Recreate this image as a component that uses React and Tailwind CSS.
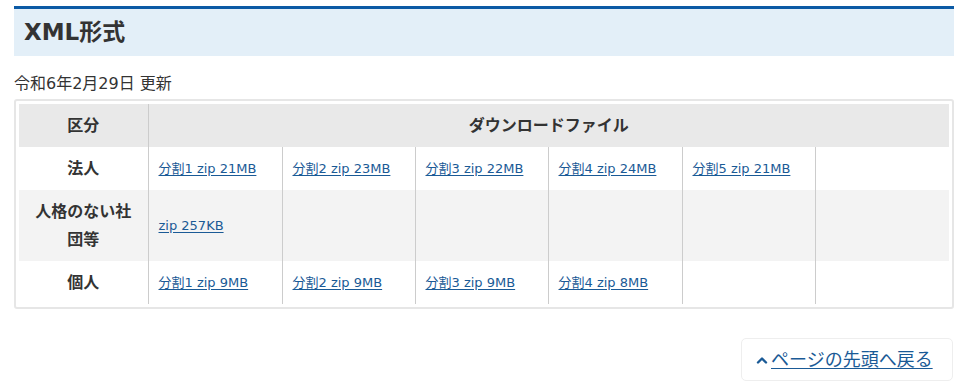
import React from 'react';

const FONT = { fontFamily: '"DejaVu Sans", "Noto Sans CJK JP", sans-serif' };

const rows = [
  { label: '法人', files: ['分割1 zip 21MB', '分割2 zip 23MB', '分割3 zip 22MB', '分割4 zip 24MB', '分割5 zip 21MB', ''], bg: 'bg-white', h: 'h-[43px]' },
  { label: '人格のない社団等', files: ['zip 257KB', '', '', '', '', ''], bg: 'bg-[#f3f3f3]', h: 'h-[71px]' },
  { label: '個人', files: ['分割1 zip 9MB', '分割2 zip 9MB', '分割3 zip 9MB', '分割4 zip 8MB', '', ''], bg: 'bg-white', h: 'h-[43px]' },
];

const ChevronUp = () => (
  <svg width="12" height="12" viewBox="0 0 12 12" className="text-[#1a5a96]">
    <path d="M2 8.5 L6 4.5 L10 8.5" fill="none" stroke="currentColor" strokeWidth="2.4" strokeLinecap="round" strokeLinejoin="round" />
  </svg>
);

export default function App() {
  return (
    <div className="w-[961px] h-[384px] bg-white text-[#333] overflow-hidden" style={FONT}>
      <div className="w-[940px] ml-[14px] pt-[6px]">
        {/* Heading */}
        <div className="h-[50px] border-t-[3px] border-[#0b5aa5] bg-[#e3eff8] flex items-center pl-[10px]">
          <h2 className="text-[23px] font-bold text-[#333] leading-none">XML形式</h2>
        </div>

        <p className="mt-[16px] text-[16px] leading-[24px] text-[#333]">令和6年2月29日 更新</p>

        {/* Table */}
        <div className="mt-[3px] border-2 border-[#e6e6e6] rounded-[3px] p-[3px]">
          <table className="w-full border-collapse table-fixed">
            <colgroup>
              <col className="w-[129px]" />
              <col className="w-[134px]" />
              <col className="w-[133px]" />
              <col className="w-[133px]" />
              <col className="w-[134px]" />
              <col className="w-[133px]" />
              <col />
            </colgroup>
            <thead>
              <tr className="bg-[#e9e9e9] h-[43px]">
                <th className="text-[16px] font-bold text-[#333] border-r border-[#cccccc]">区分</th>
                <th colSpan={6} className="text-[16px] font-bold text-[#333]">ダウンロードファイル</th>
              </tr>
            </thead>
            <tbody>
              {rows.map((r) => (
                <tr key={r.label} className={`${r.bg} ${r.h}`}>
                  <th className="text-[16px] font-bold text-[#333] leading-[28px] px-[14px] border-r border-[#cccccc]">{r.label}</th>
                  {r.files.map((f, i) => (
                    <td key={i} className={`pl-[10px] text-[13px] ${i < 5 ? 'border-r border-[#cccccc]' : ''}`}>
                      {f && <a href="#" className="text-[#1a5a96] underline underline-offset-2">{f}</a>}
                    </td>
                  ))}
                </tr>
              ))}
            </tbody>
          </table>
        </div>

        {/* Back to top */}
        <div className="flex justify-end mt-[29px] pr-[1px]">
          <a href="#" className="w-[212px] h-[43px] border border-[#eeeeee] rounded-[5px] flex items-center gap-[3px] pl-[14px] text-[18px] text-[#1a5a96]">
            <ChevronUp />
            <span className="underline underline-offset-2">ページの先頭へ戻る</span>
          </a>
        </div>
      </div>
    </div>
  );
}
